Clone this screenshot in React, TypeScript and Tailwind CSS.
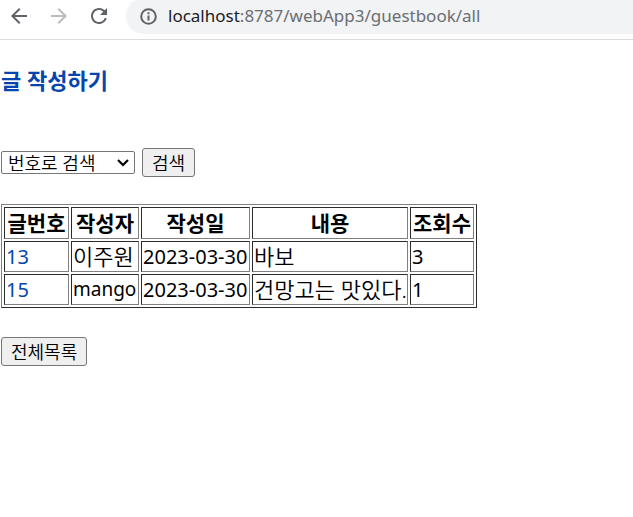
import React, { useState } from "react";
import { MdArrowBack, MdArrowForward, MdRefresh } from "react-icons/md";

interface Entry {
  id: number;
  writer: string;
  date: string;
  content: string;
  views: number;
}

const entries: Entry[] = [
  { id: 13, writer: "이주원", date: "2023-03-30", content: "바보", views: 3 },
  { id: 15, writer: "mango", date: "2023-03-30", content: "건망고는 맛있다.", views: 1 },
];

const columns = [
  { label: "글번호", width: "w-[65px]" },
  { label: "작성자", width: "w-[68px]" },
  { label: "작성일", width: "w-[109px]" },
  { label: "내용", width: "w-[156px]" },
  { label: "조회수", width: "w-[64px]" },
];

const cell =
  "border border-t-[#2b2b2b] border-l-[#2b2b2b] border-b-[#808080] border-r-[#808080] px-px py-0 whitespace-nowrap";

const button =
  "h-[29px] rounded-[3px] border border-[#767676] bg-[#efefef] px-[9px] text-[18px] leading-[26px] font-[350]";

const Toolbar: React.FC = () => (
  <header className="flex h-10 items-start overflow-hidden border-b border-[#d9dbde] text-[#5f6368]">
    <div className="flex w-[126px] gap-4 pt-1 pl-[7px]">
      <button type="button" aria-label="뒤로">
        <MdArrowBack className="size-6" />
      </button>
      <button type="button" aria-label="앞으로" className="text-[#babcbe]">
        <MdArrowForward className="size-6" />
      </button>
      <button type="button" aria-label="새로고침">
        <MdRefresh className="size-6" />
      </button>
    </div>
    <div className="-mt-0.5 flex h-9 flex-1 items-center gap-2.5 rounded-l-full bg-[#f1f3f4] pl-3">
      <svg viewBox="0 0 20 20" className="size-5" fill="none" stroke="currentColor" strokeWidth="2">
        <circle cx="10.5" cy="10.5" r="7.3" />
        <path d="M10.5 9.5v5M10.5 6.3v2" />
      </svg>
      <span className="text-[17px] whitespace-nowrap text-[#6b6e72]">
        <span className="text-[#202124]">localhost</span>:8787/webApp3/guestbook/all
      </span>
    </div>
  </header>
);

export default function App() {
  const [kind, setKind] = useState("id");

  return (
    <div className="min-h-screen bg-white font-['Noto_Sans','Noto_Sans_CJK_KR',sans-serif] text-black">
      <Toolbar />
      <main className="flex flex-col items-start px-px pt-6">
        <a href="#write" className="text-[22px] leading-8 font-bold text-[#0645ad]">
          글 작성하기
        </a>
        <form className="mt-[52px] flex items-center gap-[7px]" onSubmit={(e) => e.preventDefault()}>
          <div className="relative flex">
            <select
              aria-label="검색 조건"
              value={kind}
              onChange={(e) => setKind(e.target.value)}
              className="h-[23px] w-[134px] appearance-none rounded-[2px] border border-[#767676] bg-white pl-1.5 text-[18px] leading-5 font-[350]"
            >
              <option value="id">번호로 검색</option>
              <option value="writer">작성자로 검색</option>
            </select>
            <svg
              viewBox="0 0 12 8"
              className="pointer-events-none absolute top-2 right-[6px] h-2 w-3"
              fill="none"
              stroke="currentColor"
              strokeWidth="2.2"
            >
              <path d="M1 1l5 5 5-5" />
            </svg>
          </div>
          <button type="submit" className={button}>
            검색
          </button>
        </form>
        <table className="mt-[27px] w-[476px] table-fixed border-separate border-spacing-0.5 border border-t-[#808080] border-l-[#808080] border-b-[#2b2b2b] border-r-[#2b2b2b] text-[22px]">
          <thead className="text-[21px] leading-[30px]">
            <tr>
              {columns.map((c) => (
                <th key={c.label} className={`${cell} ${c.width}`}>
                  {c.label}
                </th>
              ))}
            </tr>
          </thead>
          <tbody className="leading-[29px]">
            {entries.map((e) => (
              <tr key={e.id}>
                <td className={`${cell} text-[20px]`}>
                  <a href={`#${e.id}`} className="text-[#0645ad]">
                    {e.id}
                  </a>
                </td>
                <td className={`${cell} ${/^[a-z]/i.test(e.writer) ? "text-[19px]" : "font-[350]"}`}>
                  {e.writer}
                </td>
                <td className={`${cell} text-[20px]`}>{e.date}</td>
                <td className={`${cell} font-[350]`}>{e.content}</td>
                <td className={`${cell} text-[20px]`}>{e.views}</td>
              </tr>
            ))}
          </tbody>
        </table>
        <button type="button" className={`mt-[29px] ${button}`}>
          전체목록
        </button>
      </main>
    </div>
  );
}
